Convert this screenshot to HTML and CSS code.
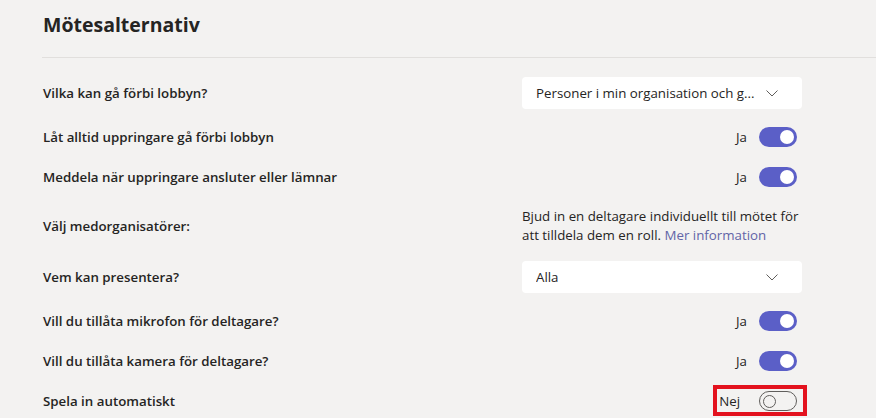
FILE: index.html
```
<!DOCTYPE html>
<html lang="sv">
<head>
<meta charset="utf-8">
<title>Mötesalternativ</title>
<link rel="stylesheet" href="styles.css">
</head>
<body>
<main class="page">
  <header class="header">
    <h1 class="title">Mötesalternativ</h1>
  </header>
  <section class="options">
    <div class="row">
      <div class="label">Vilka kan gå förbi lobbyn?</div>
      <div class="dropdown">
        <span class="dropdown-text">Personer i min organisation och g...</span>
        <svg class="chevron" width="12" height="7" viewBox="0 0 12 7"><path d="M0.5 0.5 L6 6 L11.5 0.5" fill="none" stroke="#605e5c" stroke-width="1"/></svg>
      </div>
    </div>
    <div class="row row-tight">
      <div class="label">Låt alltid uppringare gå förbi lobbyn</div>
      <div class="switch-ctl"><span class="state">Ja</span><span class="toggle on"><span class="knob"></span></span></div>
    </div>
    <div class="row">
      <div class="label">Meddela när uppringare ansluter eller lämnar</div>
      <div class="switch-ctl"><span class="state">Ja</span><span class="toggle on"><span class="knob"></span></span></div>
    </div>
    <div class="row row-text">
      <div class="label">Välj medorganisatörer:</div>
      <div class="info">
        <span class="info-line">Bjud in en deltagare individuellt till mötet för</span>
        <span class="info-line"><span>att tilldela dem en roll.</span> <a class="link" href="#">Mer information</a></span>
      </div>
    </div>
    <div class="row">
      <div class="label">Vem kan presentera?</div>
      <div class="dropdown">
        <span class="dropdown-text">Alla</span>
        <svg class="chevron" width="12" height="7" viewBox="0 0 12 7"><path d="M0.5 0.5 L6 6 L11.5 0.5" fill="none" stroke="#605e5c" stroke-width="1"/></svg>
      </div>
    </div>
    <div class="row row-tight">
      <div class="label">Vill du tillåta mikrofon för deltagare?</div>
      <div class="switch-ctl"><span class="state">Ja</span><span class="toggle on"><span class="knob"></span></span></div>
    </div>
    <div class="row">
      <div class="label">Vill du tillåta kamera för deltagare?</div>
      <div class="switch-ctl"><span class="state">Ja</span><span class="toggle on"><span class="knob"></span></span></div>
    </div>
    <div class="row">
      <div class="label">Spela in automatiskt</div>
      <div class="switch-ctl"><span class="state state-off">Nej</span><span class="toggle off"><span class="knob"></span></span><span class="highlight"></span></div>
    </div>
  </section>
</main>
</body>
</html>
```
FILE: styles.css
```
html, body {
  margin: 0;
  padding: 0;
  background: #f3f2f1;
}
body {
  font-family: "Open Sans", "Noto Sans", sans-serif;
  color: #252423;
  font-size: 13.3px;
  overflow: hidden;
}
.page {
  padding-left: 42px;
  height: 418px;
}
.header {
  padding-top: 11px;
  border-bottom: 1px solid #e1dfdd;
  padding-bottom: 18px;
  margin-bottom: 19px;
}
.title {
  margin: 0;
  padding-left: 1px;
  font-size: 19.5px;
  font-weight: 700;
  line-height: 28px;
  color: #252423;
}
.options {
  display: flex;
  flex-direction: column;
  gap: 20px;
  padding-right: 74px;
}
.row {
  display: flex;
  align-items: center;
  justify-content: space-between;
}
.row-tight {
  margin-top: -2px;
}
.row-text {
  margin-bottom: -4px;
}
.label {
  padding-left: 1px;
  font-weight: 600;
  line-height: 20px;
}
.dropdown {
  width: 280px;
  height: 32px;
  box-sizing: border-box;
  background: #ffffff;
  border-radius: 4px;
  display: flex;
  align-items: center;
  justify-content: space-between;
  gap: 10px;
  padding: 0 24px 0 14px;
}
.dropdown-text {
  line-height: 20px;
  white-space: nowrap;
  overflow: hidden;
  min-width: 0;
}
.chevron {
  display: block;
  flex: none;
}
.switch-ctl {
  display: flex;
  align-items: center;
  position: relative;
  padding-right: 5px;
}
.state {
  line-height: 20px;
  margin-right: 12px;
}
.state-off {
  margin-right: 19px;
}
.toggle {
  width: 38px;
  height: 20px;
  box-sizing: border-box;
  border-radius: 10px;
  display: flex;
  align-items: center;
}
.toggle.on {
  background: #5b5fc7;
  justify-content: flex-end;
  padding-right: 3px;
}
.toggle.on .knob {
  width: 14px;
  height: 14px;
  border-radius: 50%;
  background: #ffffff;
}
.toggle.off {
  border: 1px solid #605e5c;
  padding-left: 3px;
}
.toggle.off .knob {
  width: 13px;
  height: 13px;
  box-sizing: border-box;
  border-radius: 50%;
  border: 1px solid #605e5c;
}
.highlight {
  position: absolute;
  right: -5px;
  top: -6px;
  bottom: -5px;
  width: 94px;
  box-sizing: border-box;
  border: 4px solid #e3121e;
  pointer-events: none;
}
.info {
  width: 280px;
  line-height: 19px;
}
.info-line {
  display: block;
  white-space: nowrap;
}
.link {
  color: #6264a7;
  text-decoration: none;
}
```
